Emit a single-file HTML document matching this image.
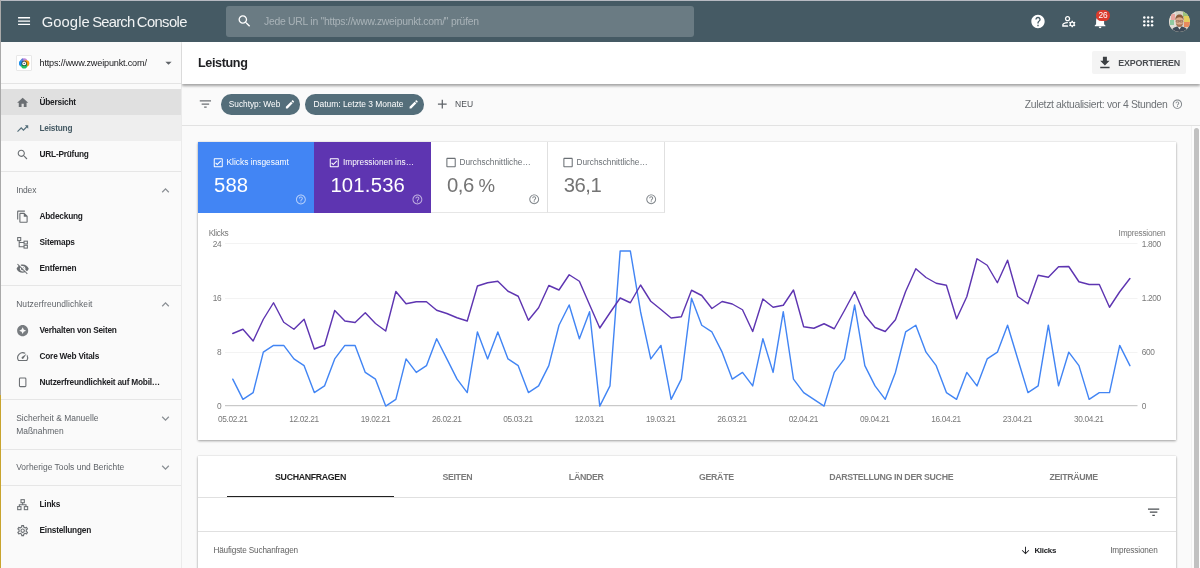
<!DOCTYPE html>
<html lang="de">
<head>
<meta charset="utf-8">
<title>Leistung – Google Search Console</title>
<style>
*{box-sizing:border-box}
html,body{margin:0;padding:0}
body{width:1200px;height:568px;overflow:hidden;position:relative;background:#fafafa;font-family:"Liberation Sans",sans-serif;color:#202124;-webkit-font-smoothing:antialiased}
#app{position:absolute;left:0;top:0;width:1200px;height:568px;overflow:hidden;will-change:transform;opacity:.999}
.abs,.t{position:absolute;white-space:nowrap}
.t{line-height:12px;height:12px;margin-top:-6px}
svg{position:absolute;display:block;overflow:visible}
/* top bar */
.topbar{position:absolute;left:0;top:0;width:1200px;height:42px;background:#455a64;color:#fff}
.brand{left:41.7px;top:21.7px;font-size:14.8px;line-height:20px;height:20px;margin-top:-10px;color:#f1f3f4}.brand{word-spacing:-1.7px}.brand .g{letter-spacing:.07px}.brand .s1{letter-spacing:-.79px}.brand .s2{letter-spacing:-.62px}
.search{position:absolute;left:226px;top:6px;width:468px;height:31px;border-radius:3px;background:#6a7b83}
.search .t{left:38px;top:15.5px;font-size:10.4px;letter-spacing:-.26px;color:#a9b3b8}
.badge{position:absolute;left:1096px;top:10.4px;width:14px;height:10.4px;border-radius:5.2px;background:#db3b2d;color:#fff;font-size:8.3px;line-height:10.6px;text-align:center;letter-spacing:-.1px}
.avatar{position:absolute;left:1168.8px;top:10.8px;width:21px;height:21px;border-radius:50%;overflow:hidden;background:#b9b49a}
/* sidebar */
.sidebar{position:absolute;left:0;top:42px;width:181.5px;height:526px;background:#fafafa;border-right:1px solid #ebebeb}
.prop{position:absolute;left:0;top:0;width:180.5px;height:41.5px;border-bottom:1px solid #e4e4e4}
.prop .fav{position:absolute;left:16px;top:13px;width:16px;height:16px;background:#fff;border:1px solid #e8e8e8;border-radius:1px}
.prop .t{left:39.5px;top:20.9px;font-size:9.1px;letter-spacing:-.17px;color:#202124}
.row{position:absolute;left:0;width:180.5px;height:26px}
.row.sel1{background:#e0e0e0}
.row.sel2{background:#eeeeee}
.row .t{left:39.5px;top:13px;font-size:8.3px;letter-spacing:-.22px;font-weight:bold;color:#202124}
.row.cur .t{color:#455a64}
.row svg{left:16.4px;top:6.8px;width:13.33px;height:13.33px;fill:#6b6f73}
.sec{position:absolute;left:0;width:180.5px}
.sec .t{left:16.2px;font-size:8.45px;letter-spacing:.01px;color:#5f6368}
.sec svg{left:157.6px;width:15px;height:15px;fill:#8a8f94}
.hr{position:absolute;left:0;width:180.5px;height:1px;background:#e6e6e6}
/* main */
.titlebar{z-index:3;position:absolute;left:181.5px;top:42px;width:1018.5px;height:41.5px;background:#fff;box-shadow:0 1.5px 2.5px rgba(0,0,0,.3),0 .5px 4px rgba(0,0,0,.1);clip-path:inset(0 0 -10px 0)}
.titlebar h1{margin:-6px 0 0 0;font-weight:bold;left:16.5px;top:20.8px;font-size:12.6px;letter-spacing:-.37px;color:#202124}
.export{position:absolute;left:910.4px;top:9px;width:94.1px;height:23px;background:#f4f4f4;border-radius:2px}
.export .t{left:26.4px;top:12px;font-size:8.9px;font-weight:bold;color:#4a4d51;letter-spacing:-.17px}
.filterbar{position:absolute;left:181.5px;top:84px;width:1018.5px;height:41.5px;background:#fafafa;border-bottom:1px solid #e2e2e2}
.chip{position:absolute;top:10px;height:20.5px;border-radius:10.25px;background:#546e7a;color:#fff}
.chip .t{left:7.75px;top:10.4px;font-size:8.3px;color:#fff}
.new{left:273.6px;top:20.4px;font-size:8.5px;letter-spacing:0;color:#4d5156}
.updated{top:21.2px;font-size:10.4px;letter-spacing:-.33px;color:#6e7276}
.scroll{position:absolute;left:1194px;top:128px;width:5px;height:445px;border-radius:2.5px;background:#c1c1c1}
.card{position:absolute;left:198px;width:978px;background:#fff;box-shadow:0 1px 2.5px rgba(0,0,0,.36),0 0 1px rgba(0,0,0,.18)}
.tile{position:absolute;top:0;height:70.5px;width:116.5px}
.tile .lab{left:28.5px;top:20.2px;font-size:8.4px}
.tile .num{left:16px;top:43.3px;font-size:20.3px;letter-spacing:.12px;line-height:24px;height:24px;margin-top:-12px}
.tile.on{color:#fff}
.tile.off .lab{font-size:8.27px;top:20.8px;color:#6b7075}.tile.off .num{color:#747474;letter-spacing:-.45px}.tile.t4 .num{left:15.7px}.tile.t2 .num{left:16.4px;letter-spacing:.2px}.tile.t2 .lab{left:29px;font-size:8.3px}.tile .pct{font-size:18.6px;margin-left:-.6px}
.tile.off{color:#5f6368;border-right:1px solid #e0e0e0;border-bottom:1px solid #e6e6e6;background:#fff}
.chart text{font-family:"Liberation Sans",sans-serif;font-size:8.3px;letter-spacing:-.35px;fill:#797979}
.tab{top:20.8px;font-size:8.8px;letter-spacing:-.33px;color:#7b7b7b;font-weight:bold;transform:translateX(-50%)}
.tab.act{color:#212121}
.th{top:95px;font-size:8.2px;letter-spacing:-.15px;color:#616161}
.track{position:absolute;left:1191px;top:126px;width:9px;height:442px;background:#fcfcfc;border-left:1px solid #f1f1f1}
</style>
</head>
<body>
<div id="app">

<header class="topbar">
  <svg style="left:0;top:0;transform:translate(16.06px,13.05px);width:16px;height:16px" viewBox="0 0 24 24" fill="#fff"><path d="M3 18h18v-2H3v2zm0-5h18v-2H3v2zm0-7v2h18V6H3z"/></svg>
  <span class="t brand"><span class="g">Google</span> <span class="s1">Search</span> <span class="s2">Console</span></span>
  <div class="search">
    <svg style="left:0;top:0;transform:translate(10.5px,7.2px);width:16px;height:16px" viewBox="0 0 24 24" fill="#fff"><path d="M15.5 14h-.79l-.28-.27C15.41 12.59 16 11.11 16 9.5 16 5.91 13.09 3 9.5 3S3 5.91 3 9.5 5.91 16 9.5 16c1.61 0 3.09-.59 4.23-1.57l.27.28v.79l5 4.99L20.49 19l-4.99-5zm-6 0C7.01 14 5 11.99 5 9.5S7.01 5 9.5 5 14 7.01 14 9.5 11.99 14 9.5 14z"/></svg>
    <span class="t">Jede URL in "https://www.zweipunkt.com/" prüfen</span>
  </div>
  <svg style="left:0;top:0;transform:translate(1030px,13.5px);width:16px;height:16px" viewBox="0 0 24 24" fill="#fff"><path d="M12 2C6.48 2 2 6.48 2 12s4.48 10 10 10 10-4.48 10-10S17.520 2 12 2zm1 17h-2v-2h2v2zm2.070-7.750l-.9.920C13.450 12.900 13 13.500 13 15h-2v-.5c0-1.100.450-2.100 1.170-2.830l1.240-1.260c.370-.360.590-.860.590-1.410 0-1.100-.9-2-2-2s-2 .9-2 2H8c0-2.210 1.790-4 4-4s4 1.790 4 4c0 .880-.360 1.680-.930 2.250z"/></svg>
  <svg style="left:0;top:0;transform:translate(1060.9px,13.3px);width:16px;height:16px" viewBox="0 0 24 24" fill="#fff"><path d="M4 18v-.65c0-.34.16-.66.41-.81C6.100 15.530 8.030 15 10 15c.03 0 .05 0 .08.01.1-.7.3-1.370.59-1.980-.22-.02-.44-.03-.67-.03-2.420 0-4.680.67-6.610 1.820-.88.52-1.390 1.500-1.390 2.530V20h9.260c-.42-.6-.75-1.280-.97-2H4z"/><path d="M10 12c2.210 0 4-1.790 4-4s-1.790-4-4-4-4 1.790-4 4 1.790 4 4 4zm0-6c1.100 0 2 .9 2 2s-.9 2-2 2-2-.9-2-2 .9-2 2-2z"/><path d="M20.750 16c0-.22-.03-.42-.06-.63l1.140-1.010-1-1.730-1.450.49c-.32-.27-.68-.48-1.080-.63L18 11h-2l-.3 1.490c-.4.15-.76.36-1.080.63l-1.450-.49-1 1.730 1.140 1.010c-.03.21-.06.41-.06.63s.03.42.06.63l-1.140 1.010 1 1.730 1.450-.49c.32.27.68.48 1.080.63L16 21h2l.3-1.490c.4-.15.76-.36 1.080-.63l1.450.49 1-1.730-1.140-1.010c.03-.21.06-.41.06-.63zM17 18c-1.100 0-2-.9-2-2s.9-2 2-2 2 .9 2 2-.9 2-2 2z"/></svg>
  <svg style="left:0;top:0;transform:translate(1092.1px,13.5px);width:16px;height:16px" viewBox="0 0 24 24" fill="#fff"><path d="M12 22c1.100 0 2-.9 2-2h-4c0 1.100.890 2 2 2zm6-6v-5c0-3.070-1.640-5.640-4.500-6.320V4c0-.830-.670-1.500-1.500-1.500s-1.500.670-1.500 1.500v.680C7.630 5.360 6 7.920 6 11v5l-2 2v1h16v-1l-2-2z"/></svg>
  <div class="badge">26</div>
  <svg style="left:0;top:0;transform:translate(1143px,16px);width:10.4px;height:10.8px" viewBox="0 0 20 20" fill="#fff"><circle cx="2.500" cy="2.500" r="2.400"/><circle cx="10" cy="2.500" r="2.400"/><circle cx="17.500" cy="2.500" r="2.400"/><circle cx="2.500" cy="10" r="2.400"/><circle cx="10" cy="10" r="2.400"/><circle cx="17.500" cy="10" r="2.400"/><circle cx="2.500" cy="17.500" r="2.400"/><circle cx="10" cy="17.500" r="2.400"/><circle cx="17.500" cy="17.500" r="2.400"/></svg>
  <div class="avatar">
    <svg style="left:0;top:0;width:21px;height:21px" viewBox="0 0 21 21"><rect width="21" height="21" fill="#d6d2c6"/><rect x="0" y="0" width="7" height="21" fill="#e2ddd6"/><rect x="2" y="3" width="4" height="6" fill="#e9a7a0"/><rect x="14" y="0" width="7" height="6" fill="#9cc27a"/><rect x="15" y="5" width="6" height="7" fill="#e4cf5c"/><rect x="15" y="11" width="6" height="5" fill="#e98a5e"/><rect x="1" y="9" width="4" height="5" fill="#8fc9a0"/><path d="M2.500 21c0-4 3.500-5.500 8-5.500s8 1.500 8 5.500z" fill="#3f4b58"/><path d="M8.800 15.800l1.700 2.700 1.700-2.700z" fill="#e4e4e4"/><ellipse cx="10.500" cy="10.200" rx="3.900" ry="4.900" fill="#dcab8b"/><path d="M6.400 9.200c-.3-4 1.700-5.800 4.100-5.800s4.400 1.800 4.100 5.800c-.7-2-1.800-3-4.100-3s-3.400 1-4.100 3z" fill="#8b5a3a"/><path d="M6.800 12.200c.6 2.600 2.100 3.700 3.700 3.700s3.100-1.100 3.700-3.700c-1 .9-2.200 1.200-3.700 1.200s-2.700-.3-3.700-1.200z" fill="#a87454"/><path d="M7.200 9.600h2.700v1.500H7.200zM11.100 9.600h2.700v1.500h-2.700zM9.900 10.100h1.200" fill="none" stroke="#6b4a3a" stroke-width=".45"/></svg>
  </div>
</header>

<nav class="sidebar">
  <div class="prop">
    <div class="fav"><svg style="left:0;top:0;transform:translate(1.4px,1.6px);width:11.600px;height:11.600px" viewBox="0 0 20 20"><circle cx="6.400" cy="10" r="5.300" fill="#1a8ee9"/><circle cx="10" cy="6.400" r="5.300" fill="#c48ad9"/><circle cx="13.600" cy="10" r="5.300" fill="#f49a0d"/><circle cx="10" cy="13.600" r="5.300" fill="#23c162"/><path d="M10 10L2 13A8.500 8.500 0 0 1 4 4z" fill="#1a8ee9"/><path d="M10 10L4 4A8.500 8.500 0 0 1 8 1.300z" fill="#5a7fd8"/><circle cx="10" cy="10" r="4.700" fill="#1e3a2b" opacity=".8"/><circle cx="10" cy="10" r="3.300" fill="#fff"/><circle cx="10" cy="10.100" r="1.100" fill="#2f3b55"/></svg></div>
    <span class="t">https://www.zweipunkt.com/</span>
    <svg style="left:0;top:0;transform:translate(161px,13.4px);width:15px;height:15px" viewBox="0 0 24 24" fill="#5f6368"><path d="M7 10l5 5 5-5z"/></svg>
  </div>

  <div class="row sel1" style="top:47px"><svg viewBox="0 0 24 24"><path d="M10 20v-6h4v6h5v-8h3L12 3 2 12h3v8z"/></svg><span class="t">Übersicht</span></div>
  <div class="row sel2 cur" style="top:73px"><svg viewBox="0 0 24 24" style="fill:#546e7a"><path d="M16 6l2.290 2.290-4.880 4.880-4-4L2 16.590 3.410 18l6-6 4 4 6.300-6.290L22 12V6z"/></svg><span class="t">Leistung</span></div>
  <div class="row" style="top:99px"><svg viewBox="0 0 24 24"><path d="M15.500 14h-.79l-.28-.27C15.410 12.590 16 11.110 16 9.500 16 5.910 13.090 3 9.500 3S3 5.910 3 9.500 5.910 16 9.500 16c1.610 0 3.090-.59 4.230-1.570l.27.28v.79l5 4.990L20.490 19l-4.990-5zm-6 0C7.010 14 5 11.990 5 9.500S7.010 5 9.500 5 14 7.010 14 9.500 11.990 14 9.500 14z"/></svg><span class="t">URL-Prüfung</span></div>

  <div class="hr" style="top:129px"></div>
  <div class="sec" style="top:148px"><span class="t" style="letter-spacing:-.1px">Index</span><svg style="top:-7.500px" viewBox="0 0 24 24"><path d="M12 8l-6 6 1.410 1.410L12 10.830l4.590 4.580L18 14z"/></svg></div>
  <div class="row" style="top:161px"><svg viewBox="0 0 24 24"><path d="M16 1H4c-1.100 0-2 .9-2 2v14h2V3h12V1zm-1 4H8c-1.100 0-1.990.9-1.990 2L6 21c0 1.100.890 2 1.990 2H19c1.100 0 2-.9 2-2V11l-6-6zM8 21V7h6v5h5v9H8z"/></svg><span class="t">Abdeckung</span></div>
  <div class="row" style="top:187px"><svg viewBox="0 0 24 24" fill="none" style="fill:none;stroke:#6b6f73;stroke-width:1.9"><rect x="3" y="2.800" width="5.500" height="5.500"/><rect x="14.500" y="9.300" width="6" height="5"/><rect x="14.500" y="16.800" width="6" height="5"/><path d="M5.750 8.300v11h8.750M5.750 11.800h8.750"/></svg><span class="t">Sitemaps</span></div>
  <div class="row" style="top:213px"><svg viewBox="0 0 24 24"><path d="M12 7c2.760 0 5 2.240 5 5 0 .650-.130 1.260-.360 1.830l2.920 2.920c1.510-1.260 2.700-2.890 3.430-4.750-1.730-4.390-6-7.500-11-7.500-1.400 0-2.740.250-3.980.7l2.160 2.160C10.740 7.130 11.350 7 12 7zM2 4.270l2.280 2.280.46.460C3.080 8.300 1.780 10.020 1 12c1.730 4.390 6 7.500 11 7.500 1.550 0 3.030-.3 4.380-.840l.42.420L19.730 22 21 20.730 3.270 3 2 4.270zM7.530 9.800l1.550 1.550c-.05.210-.08.430-.08.650 0 1.660 1.340 3 3 3 .220 0 .440-.03.650-.08l1.550 1.550c-.670.330-1.410.530-2.200.530-2.760 0-5-2.240-5-5 0-.790.2-1.530.530-2.200zm4.310-.780l3.150 3.150.02-.16c0-1.660-1.340-3-3-3l-.17.010z"/></svg><span class="t">Entfernen</span></div>

  <div class="hr" style="top:243px"></div>
  <div class="sec" style="top:262px"><span class="t" style="letter-spacing:.09px">Nutzerfreundlichkeit</span><svg style="top:-7.500px" viewBox="0 0 24 24"><path d="M12 8l-6 6 1.410 1.410L12 10.830l4.590 4.580L18 14z"/></svg></div>
  <div class="row" style="top:275px"><svg viewBox="0 0 24 24"><path style="fill:#787c80" d="M12 2C6.480 2 2 6.480 2 12s4.480 10 10 10 10-4.480 10-10S17.520 2 12 2zm0 3.800l1.900 4.300 4.300 1.900-4.300 1.900-1.900 4.300-1.900-4.300-4.300-1.900 4.300-1.900z" fill-rule="evenodd"/></svg><span class="t">Verhalten von Seiten</span></div>
  <div class="row" style="top:301px"><svg viewBox="0 0 24 24"><path d="M20.380 8.570l-1.230 1.850a8 8 0 0 1-.220 7.580H5.070A8 8 0 0 1 15.580 6.850l1.850-1.230A10 10 0 0 0 3.350 19a2 2 0 0 0 1.720 1h13.850a2 2 0 0 0 1.740-1 10 10 0 0 0-.270-10.440zm-9.790 6.840a2 2 0 0 0 2.830 0l5.660-8.490-8.490 5.660a2 2 0 0 0 0 2.830z"/></svg><span class="t">Core Web Vitals</span></div>
  <div class="row" style="top:327px"><svg viewBox="0 0 24 24" style="fill:none;stroke:#6b6f73;stroke-width:1.9"><rect x="6.200" y="3.700" width="11.600" height="15.400" rx="1.600"/></svg><span class="t">Nutzerfreundlichkeit auf Mobil…</span></div>

  <div class="hr" style="top:357px"></div>
  <div class="sec" style="top:376px"><span class="t">Sicherheit &amp; Manuelle</span><span class="t" style="top:13.200px">Maßnahmen</span><svg style="top:-7.500px" viewBox="0 0 24 24"><path d="M16.590 8.590L12 13.170 7.410 8.590 6 10l6 6 6-6z"/></svg></div>
  <div class="hr" style="top:407px"></div>
  <div class="sec" style="top:425px"><span class="t">Vorherige Tools und Berichte</span><svg style="top:-7.500px" viewBox="0 0 24 24"><path d="M16.590 8.590L12 13.170 7.410 8.590 6 10l6 6 6-6z"/></svg></div>
  <div class="hr" style="top:443px"></div>

  <div class="row" style="top:449px"><svg viewBox="0 0 24 24" style="fill:none;stroke:#6b6f73;stroke-width:1.9"><rect x="9" y="3" width="6" height="5.500"/><rect x="3" y="15.500" width="6" height="5.500"/><rect x="15" y="15.500" width="6" height="5.500"/><path d="M12 8.500v3.500M6 15.500V12h12v3.500"/></svg><span class="t">Links</span></div>
  <div class="row" style="top:475px"><svg viewBox="0 0 24 24"><path fill-rule="evenodd" d="M19.430 12.980c.04-.32.070-.64.070-.98s-.03-.66-.07-.98l2.110-1.650c.19-.15.240-.42.120-.64l-2-3.460c-.12-.22-.39-.3-.61-.22l-2.490 1c-.52-.4-1.080-.73-1.690-.98l-.38-2.650C14.460 2.180 14.250 2 14 2h-4c-.25 0-.46.180-.49.420l-.38 2.650c-.61.250-1.170.590-1.690.98l-2.490-1c-.23-.09-.49 0-.61.220l-2 3.460c-.13.220-.07.490.12.640l2.110 1.650c-.04.320-.07.650-.07.980s.03.660.07.980l-2.110 1.650c-.19.150-.24.420-.12.640l2 3.460c.12.220.39.300.61.220l2.490-1c.52.4 1.080.73 1.690.98l.38 2.650c.03.240.24.420.49.420h4c.25 0 .46-.18.490-.42l.38-2.650c.61-.25 1.170-.59 1.690-.98l2.490 1c.23.09.49 0 .61-.22l2-3.460c.12-.22.07-.49-.12-.64l-2.110-1.650zm-1.980-1.710c.04.310.05.520.05.730 0 .21-.02.430-.05.730l-.14 1.130.89.700 1.080.84-.7 1.210-1.270-.51-1.040-.42-.9.680c-.43.320-.84.560-1.250.73l-1.060.43-.16 1.130-.2 1.350h-1.400l-.19-1.350-.16-1.130-1.060-.43c-.43-.18-.83-.41-1.230-.71l-.91-.7-1.060.43-1.270.51-.7-1.210 1.080-.84.890-.7-.14-1.130c-.03-.31-.05-.54-.05-.74s.02-.43.050-.73l.14-1.130-.89-.7-1.080-.84.7-1.210 1.270.51 1.040.42.900-.68c.43-.32.840-.56 1.250-.73l1.060-.43.160-1.130.20-1.350h1.390l.19 1.350.16 1.130 1.060.43c.43.180.83.410 1.230.71l.91.7 1.060-.43 1.270-.51.7 1.210-1.070.85-.89.7.14 1.130zM12 8c-2.210 0-4 1.790-4 4s1.790 4 4 4 4-1.790 4-4-1.790-4-4-4zm0 6c-1.100 0-2-.9-2-2s.9-2 2-2 2 .9 2 2-.9 2-2 2z"/></svg><span class="t">Einstellungen</span></div>
</nav>

<main>
  <section class="titlebar">
    <h1 class="t">Leistung</h1>
    <div class="export"><svg style="left:0;top:0;transform:translate(4.9px,3.85px);width:16px;height:16px" viewBox="0 0 24 24" fill="#3c4043"><path d="M19 9h-4V3H9v6H5l7 7 7-7zM5 18v2h14v-2H5z"/></svg><span class="t">EXPORTIEREN</span></div>
  </section>

  <section class="filterbar">
    <svg style="left:0;top:0;transform:translate(15.9px,12.5px);width:15px;height:15px" viewBox="0 0 24 24" fill="#6b6f73"><path d="M10 18h4v-2h-4v2zM3 6v2h18V6H3zm3 7h12v-2H6v2z"/></svg>
    <div class="chip" style="left:39.500px;width:79px"><span class="t">Suchtyp: Web</span><svg style="left:0;top:0;transform:translate(63.5px,4.8px);width:11px;height:11px" viewBox="0 0 24 24" fill="#fff"><path d="M3 17.250V21h3.750L17.810 9.940l-3.750-3.750L3 17.250zM20.710 7.040c.39-.39.39-1.020 0-1.410l-2.340-2.340c-.39-.39-1.020-.39-1.410 0l-1.830 1.830 3.750 3.750 1.830-1.830z"/></svg></div>
    <div class="chip" style="left:123.800px;width:118.700px"><span class="t" style="left:8.1px;font-size:8.45px">Datum: Letzte 3 Monate</span><svg style="left:0;top:0;transform:translate(103.2px,4.8px);width:11px;height:11px" viewBox="0 0 24 24" fill="#fff"><path d="M3 17.250V21h3.750L17.810 9.940l-3.750-3.750L3 17.250zM20.710 7.040c.39-.39.39-1.020 0-1.410l-2.340-2.340c-.39-.39-1.020-.39-1.410 0l-1.830 1.830 3.750 3.750 1.830-1.830z"/></svg></div>
    <svg style="left:0;top:0;transform:translate(252.8px,12.7px);width:15px;height:15px" viewBox="0 0 24 24" fill="#5f6368"><path d="M19 13h-6v6h-2v-6H5v-2h6V5h2v6h6v2z"/></svg>
    <span class="t new">NEU</span>
    <span class="t updated" style="left:843.200px">Zuletzt aktualisiert: vor 4 Stunden</span>
    <svg style="left:0;top:0;transform:translate(989.8px,14.6px);width:11.200px;height:11.200px" viewBox="0 0 24 24" fill="#80868b"><path d="M11 18h2v-2h-2v2zm1-16C6.480 2 2 6.480 2 12s4.480 10 10 10 10-4.480 10-10S17.520 2 12 2zm0 18c-4.410 0-8-3.590-8-8s3.590-8 8-8 8 3.590 8 8-3.590 8-8 8zm0-14c-2.210 0-4 1.790-4 4h2c0-1.100.9-2 2-2s2 .9 2 2c0 2-3 1.750-3 5h2c0-2.250 3-2.500 3-5 0-2.210-1.790-4-4-4z"/></svg>
  </section>

  <div class="track"></div>
  <div class="scroll"></div>

  <section class="card" style="top:142px;height:297.500px">
    <div class="tile on" style="left:0;width:116px;background:#4285f4">
      <svg style="left:0;top:0;transform:translate(14.25px,14.75px);width:12px;height:12px" viewBox="0 0 24 24" fill="#fff"><path d="M19 3H5c-1.110 0-2 .9-2 2v14c0 1.100.89 2 2 2h14c1.110 0 2-.9 2-2V5c0-1.100-.89-2-2-2zm0 16H5V5h14v14zM17.990 9l-1.410-1.420-6.590 6.590-2.580-2.570-1.420 1.410 4 3.990z"/></svg>
      <span class="t lab">Klicks insgesamt</span><span class="t num">588</span>
      <svg style="left:0;top:0;transform:translate(97px,51.6px);width:11.800px;height:11.800px" viewBox="0 0 24 24" fill="#fff" opacity=".6"><path d="M11 18h2v-2h-2v2zm1-16C6.480 2 2 6.480 2 12s4.480 10 10 10 10-4.480 10-10S17.520 2 12 2zm0 18c-4.410 0-8-3.590-8-8s3.590-8 8-8 8 3.590 8 8-3.590 8-8 8zm0-14c-2.210 0-4 1.790-4 4h2c0-1.100.9-2 2-2s2 .9 2 2c0 2-3 1.750-3 5h2c0-2.250 3-2.500 3-5 0-2.210-1.790-4-4-4z"/></svg>
    </div>
    <div class="tile on t2" style="left:116px;width:117px;background:#5e35b1">
      <svg style="left:0;top:0;transform:translate(14.25px,14.75px);width:12px;height:12px" viewBox="0 0 24 24" fill="#fff"><path d="M19 3H5c-1.110 0-2 .9-2 2v14c0 1.100.89 2 2 2h14c1.110 0 2-.9 2-2V5c0-1.100-.89-2-2-2zm0 16H5V5h14v14zM17.990 9l-1.410-1.420-6.590 6.590-2.580-2.570-1.420 1.410 4 3.990z"/></svg>
      <span class="t lab">Impressionen ins…</span><span class="t num">101.536</span>
      <svg style="left:0;top:0;transform:translate(97.5px,51.6px);width:11.800px;height:11.800px" viewBox="0 0 24 24" fill="#fff" opacity=".6"><path d="M11 18h2v-2h-2v2zm1-16C6.480 2 2 6.480 2 12s4.480 10 10 10 10-4.480 10-10S17.520 2 12 2zm0 18c-4.410 0-8-3.590-8-8s3.590-8 8-8 8 3.590 8 8-3.590 8-8 8zm0-14c-2.210 0-4 1.790-4 4h2c0-1.100.9-2 2-2s2 .9 2 2c0 2-3 1.750-3 5h2c0-2.250 3-2.500 3-5 0-2.210-1.790-4-4-4z"/></svg>
    </div>
    <div class="tile off" style="left:233px">
      <svg style="left:0;top:0;transform:translate(13.8px,14.3px);width:12.500px;height:12.500px" viewBox="0 0 24 24" fill="#6b7075"><path d="M19 5v14H5V5h14m0-2H5c-1.100 0-2 .9-2 2v14c0 1.100.9 2 2 2h14c1.100 0 2-.9 2-2V5c0-1.100-.9-2-2-2z"/></svg>
      <span class="t lab">Durchschnittliche…</span><span class="t num">0,6 <span class="pct">%</span></span>
      <svg style="left:0;top:0;transform:translate(97.3px,51.4px);width:11.800px;height:11.800px" viewBox="0 0 24 24" fill="#80868b"><path d="M11 18h2v-2h-2v2zm1-16C6.480 2 2 6.480 2 12s4.480 10 10 10 10-4.480 10-10S17.520 2 12 2zm0 18c-4.410 0-8-3.590-8-8s3.590-8 8-8 8 3.590 8 8-3.590 8-8 8zm0-14c-2.210 0-4 1.790-4 4h2c0-1.100.9-2 2-2s2 .9 2 2c0 2-3 1.750-3 5h2c0-2.250 3-2.500 3-5 0-2.210-1.790-4-4-4z"/></svg>
    </div>
    <div class="tile off t4" style="left:350px;width:116.500px">
      <svg style="left:0;top:0;transform:translate(13.8px,14.3px);width:12.500px;height:12.500px" viewBox="0 0 24 24" fill="#6b7075"><path d="M19 5v14H5V5h14m0-2H5c-1.100 0-2 .9-2 2v14c0 1.100.9 2 2 2h14c1.100 0 2-.9 2-2V5c0-1.100-.9-2-2-2z"/></svg>
      <span class="t lab">Durchschnittliche…</span><span class="t num">36,1</span>
      <svg style="left:0;top:0;transform:translate(97.3px,51.4px);width:11.800px;height:11.800px" viewBox="0 0 24 24" fill="#80868b"><path d="M11 18h2v-2h-2v2zm1-16C6.480 2 2 6.480 2 12s4.480 10 10 10 10-4.480 10-10S17.520 2 12 2zm0 18c-4.410 0-8-3.590-8-8s3.590-8 8-8 8 3.590 8 8-3.590 8-8 8zm0-14c-2.210 0-4 1.790-4 4h2c0-1.100.9-2 2-2s2 .9 2 2c0 2-3 1.750-3 5h2c0-2.250 3-2.500 3-5 0-2.210-1.790-4-4-4z"/></svg>
    </div>

    <svg class="chart" style="left:-198px;top:-142px;width:1200px;height:568px" viewBox="0 0 1200 568">
      <g stroke="#f3f3f3" stroke-width="1">
        <line x1="225" y1="243.500" x2="1137.500" y2="243.500"/>
        <line x1="225" y1="298.500" x2="1137.500" y2="298.500"/>
        <line x1="225" y1="352.500" x2="1137.500" y2="352.500"/>
      </g>
      <line x1="225" y1="405.700" x2="1137.500" y2="405.700" stroke="#bdbdbd" stroke-width="1"/>
      <text x="208.700" y="235.900">Klicks</text>
      <g text-anchor="end">
        <text x="221.200" y="246.700">24</text>
        <text x="221.200" y="300.700">16</text>
        <text x="221.200" y="354.700">8</text>
        <text x="221.200" y="408.700">0</text>
        <text x="1165.400" y="235.900" style="letter-spacing:-.25px">Impressionen</text>
      </g>
      <g>
        <text x="1141.800" y="246.700">1.800</text>
        <text x="1141.800" y="300.700">1.200</text>
        <text x="1141.800" y="354.700">600</text>
        <text x="1141.800" y="408.700">0</text>
      </g>
      <g text-anchor="middle">
        <text x="232.750" y="422.200">05.02.21</text>
        <text x="304.080" y="422.200">12.02.21</text>
        <text x="375.410" y="422.200">19.02.21</text>
        <text x="446.740" y="422.200">26.02.21</text>
        <text x="518.070" y="422.200">05.03.21</text>
        <text x="589.400" y="422.200">12.03.21</text>
        <text x="660.730" y="422.200">19.03.21</text>
        <text x="732.060" y="422.200">26.03.21</text>
        <text x="803.390" y="422.200">02.04.21</text>
        <text x="874.720" y="422.200">09.04.21</text>
        <text x="946.050" y="422.200">16.04.21</text>
        <text x="1017.380" y="422.200">23.04.21</text>
        <text x="1088.710" y="422.200">30.04.21</text>
      </g>
      <polyline fill="none" stroke="#4285f4" stroke-width="1.42" stroke-linejoin="round" stroke-linecap="round" points="232.75,379.14 242.94,399.36 253.14,392.62 263.33,352.18 273.53,345.44 283.73,345.44 293.92,358.92 304.12,365.66 314.31,392.62 324.50,385.88 334.70,358.92 344.89,345.44 355.09,345.44 365.28,372.40 375.48,379.14 385.68,406.10 395.87,399.36 406.06,358.92 416.26,372.40 426.46,365.66 436.65,338.70 446.85,358.92 457.04,379.14 467.24,392.62 477.43,331.96 487.62,358.92 497.82,331.96 508.01,358.92 518.21,365.66 528.40,392.62 538.60,385.88 548.80,365.66 558.99,325.22 569.18,305.00 579.38,338.70 589.58,311.74 599.77,406.10 609.97,385.88 620.16,251.08 630.36,251.08 640.55,311.74 650.75,358.92 660.94,345.44 671.13,399.36 681.33,379.14 691.53,298.26 701.72,325.22 711.91,331.96 722.11,352.18 732.31,379.14 742.50,372.40 752.70,385.88 762.89,338.70 773.09,372.40 783.28,311.74 793.48,379.14 803.67,392.62 813.87,399.36 824.06,406.10 834.25,372.40 844.45,358.92 854.64,305.00 864.84,365.66 875.03,385.88 885.23,399.36 895.43,372.40 905.62,331.96 915.82,325.22 926.01,352.18 936.21,365.66 946.40,392.62 956.60,399.36 966.79,372.40 976.99,385.88 987.18,358.92 997.38,352.18 1007.57,325.22 1017.76,358.92 1027.96,392.62 1038.15,385.88 1048.35,325.22 1058.55,385.88 1068.74,352.18 1078.93,365.66 1089.13,399.36 1099.33,392.62 1109.52,392.62 1119.72,345.44 1129.91,365.66"/>
      <polyline fill="none" stroke="#5e35b1" stroke-width="1.42" stroke-linejoin="round" stroke-linecap="round" points="232.75,333.50 242.94,329.25 253.14,341.00 263.33,319.25 273.53,302.75 283.73,322.25 293.92,329.25 304.12,319.25 314.31,349.00 324.50,345.25 334.70,310.50 344.89,321.00 355.09,322.50 365.28,312.75 375.48,323.50 385.68,331.00 395.87,291.50 406.06,303.75 416.26,301.75 426.46,301.75 436.65,310.25 446.85,313.50 457.04,317.75 467.24,321.00 477.43,286.00 487.62,282.75 497.82,281.25 508.01,291.25 518.21,296.25 528.40,320.25 538.60,307.75 548.80,285.50 558.99,290.00 569.18,274.75 579.38,281.25 589.58,304.75 599.77,328.00 609.97,312.75 620.16,298.00 630.36,302.75 640.55,285.00 650.75,301.25 660.94,309.50 671.13,318.00 681.33,316.75 691.53,290.25 701.72,295.50 711.91,308.50 722.11,301.50 732.31,304.00 742.50,309.75 752.70,331.50 762.89,299.00 773.09,307.25 783.28,305.25 793.48,290.00 803.67,326.75 813.87,328.25 824.06,323.75 834.25,328.75 844.45,310.50 854.64,291.50 864.84,315.25 875.03,327.50 885.23,331.50 895.43,319.75 905.62,291.50 915.82,268.75 926.01,277.50 936.21,283.25 946.40,285.25 956.60,318.75 966.79,296.75 976.99,258.75 987.18,265.25 997.38,282.75 1007.57,260.25 1017.76,296.50 1027.96,303.75 1038.15,275.25 1048.35,277.25 1058.55,266.75 1068.74,266.50 1078.93,281.75 1089.13,284.50 1099.33,284.50 1109.52,307.25 1119.72,291.75 1129.91,278.50"/>
    </svg>
  </section>

  <section class="card" style="top:456px;height:130px">
    <span class="t tab act" style="left:112.500px">SUCHANFRAGEN</span>
    <span class="t tab" style="left:259.300px">SEITEN</span>
    <span class="t tab" style="left:388.200px">LÄNDER</span>
    <span class="t tab" style="left:518.400px">GERÄTE</span>
    <span class="t tab" style="left:693.200px">DARSTELLUNG IN DER SUCHE</span>
    <span class="t tab" style="left:875.700px">ZEITRÄUME</span>
    <div class="abs" style="left:0;top:41px;width:978px;height:1px;background:#e0e0e0"></div>
    <div class="abs" style="left:29px;top:39.700px;width:167px;height:1.400px;background:#212121"></div>
    <svg style="left:0;top:0;transform:translate(948.1px,48.7px);width:15px;height:15px" viewBox="0 0 24 24" fill="#4a4e52"><path d="M10 18h4v-2h-4v2zM3 6v2h18V6H3zm3 7h12v-2H6v2z"/></svg>
    <div class="abs" style="left:0;top:74.800px;width:978px;height:1px;background:#e0e0e0"></div>
    <span class="t th" style="left:15.400px">Häufigste Suchanfragen</span>
    <svg style="left:0;top:0;transform:translate(821.9px,89px);width:11.200px;height:11.200px" viewBox="0 0 24 24" fill="#202124"><path d="M20 12l-1.410-1.410L13 16.170V4h-2v12.170l-5.580-5.590L4 12l8 8 8-8z"/></svg>
    <span class="t th" style="left:836.400px;color:#202124;font-weight:bold;font-size:7.9px;letter-spacing:-.25px">Klicks</span>
    <span class="t th" style="left:912.200px">Impressionen</span>
  </section>
</main>

<div class="abs" style="left:0;top:0;width:1200px;height:1px;background:#b7bac2"></div>
<div class="abs" style="left:0;top:0;width:1px;height:395px;background:#a9a9a9"></div>
<div class="abs" style="left:0;top:395px;width:1px;height:173px;background:#c8a42e"></div>
</div>
</body>
</html>
